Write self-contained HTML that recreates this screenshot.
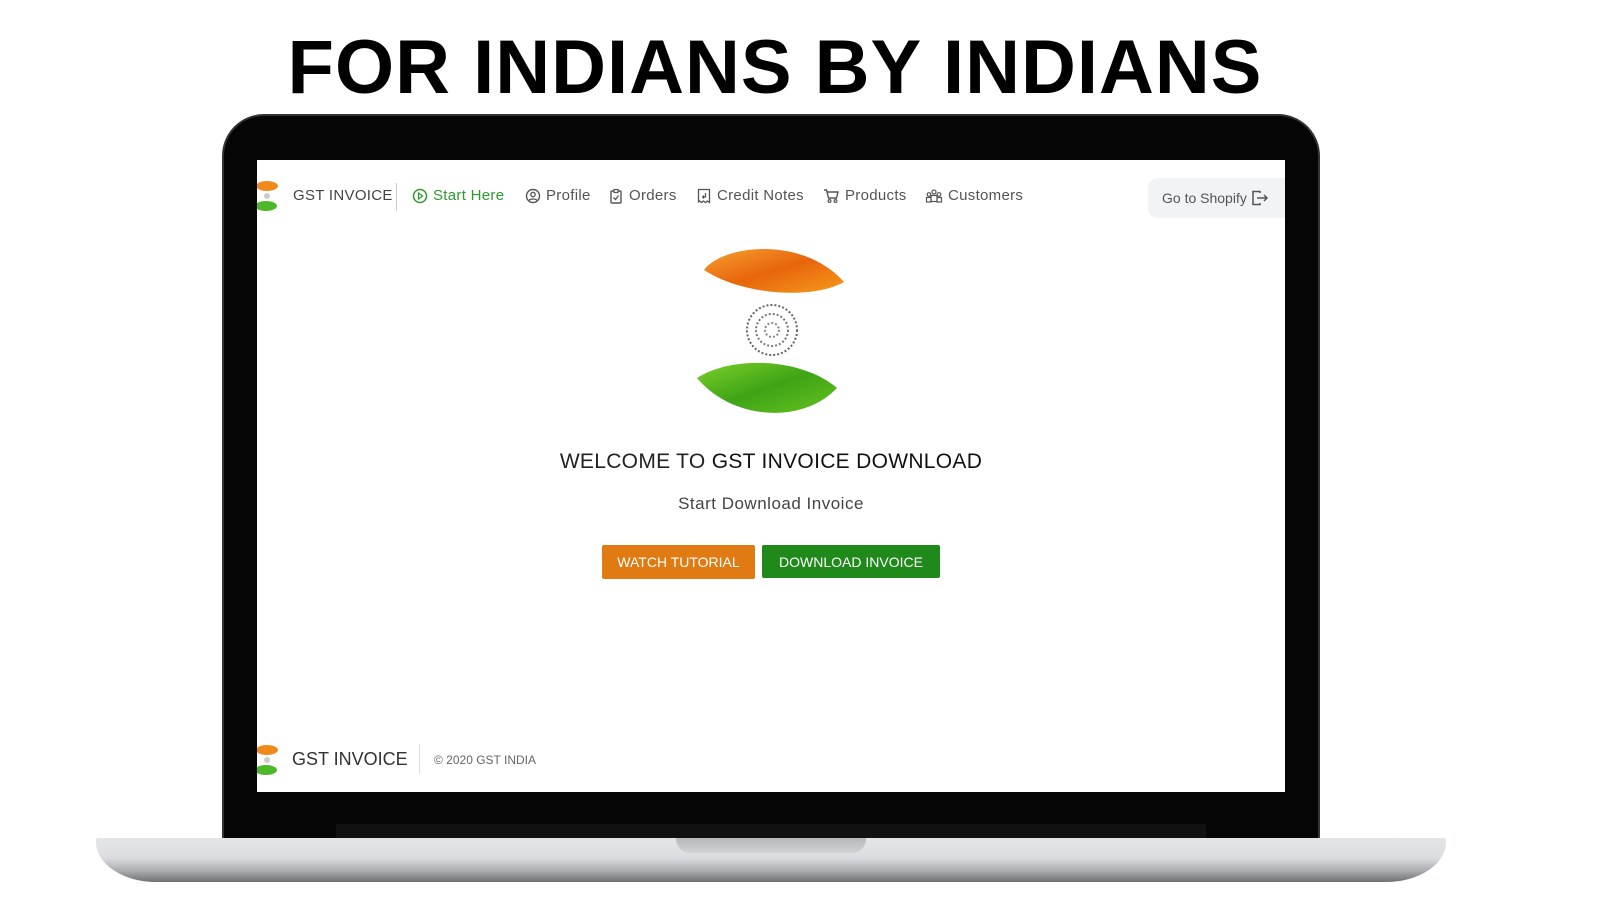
<!DOCTYPE html>
<html><head><meta charset="utf-8"><style>
*{margin:0;padding:0;box-sizing:border-box}
body{width:1600px;height:900px;background:#fff;position:relative;overflow:hidden;font-family:"Liberation Sans",sans-serif}
.title{position:absolute;left:0;width:1550px;top:24px;text-align:center;font-weight:bold;font-size:76px;letter-spacing:1px;color:#000}
.bezel{position:absolute;left:222px;top:114px;width:1098px;height:730px;background:#050505;border-radius:42px 42px 8px 8px;border:2px solid #333}
.screen{position:absolute;left:257px;top:160px;width:1028px;height:632px;background:#fff;overflow:hidden}
.base{position:absolute;left:96px;top:838px;width:1350px;height:44px;background:linear-gradient(#e4e5e7 0%,#dcdde0 45%,#a9abaf 75%,#6f7175 100%);border-radius:2px 2px 60px 60px / 2px 2px 40px 40px}
.notch{position:absolute;left:676px;top:838px;width:190px;height:15px;background:linear-gradient(#b8b9bc,#d0d1d3);border-radius:0 0 14px 14px}
.hinge{position:absolute;left:336px;top:824px;width:870px;height:14px;background:#111}
.nav span{position:absolute;top:27px;display:flex;align-items:center;font-size:15px;color:#555;letter-spacing:.3px}
.nav svg{margin-right:5px}
.flag{position:absolute;width:24px;height:32px}
.btn{position:absolute;top:385px;height:34px;color:#fff;font-size:14px;display:flex;align-items:center;justify-content:center;border-radius:2px}
</style></head><body>
<div class="title">FOR INDIANS BY INDIANS</div>
<div class="bezel"></div>
<div class="hinge"></div>
<div class="base"></div>
<div class="notch"></div>
<div class="screen">
 <svg class="flag" style="left:-2px;top:20px" viewBox="0 0 24 32"><ellipse cx="12" cy="6" rx="11" ry="5" fill="#f08a1c"/><circle cx="12" cy="16" r="3" fill="#ccc"/><ellipse cx="11" cy="26" rx="11" ry="5" fill="#4cb82a"/></svg>
 <div class="nav">
  <span style="left:36px;color:#444">GST INVOICE</span>
  <span style="left:139px;top:23px;width:1px;height:28px;background:#ccc"></span>
  <span style="left:155px;color:#2e9a2e"><svg width="16" height="16" viewBox="0 0 16 16"><circle cx="8" cy="8" r="6.5" fill="none" stroke="#2e9a2e" stroke-width="1.5"/><path d="M6.5 5v6l4-3z" fill="none" stroke="#2e9a2e" stroke-width="1.3"/></svg>Start Here</span>
  <span style="left:268px"><svg width="16" height="16" viewBox="0 0 16 16"><circle cx="8" cy="8" r="6.5" fill="none" stroke="#555" stroke-width="1.4"/><circle cx="8" cy="6.5" r="2.2" fill="none" stroke="#555" stroke-width="1.3"/><path d="M4 12.5c1-2 7-2 8 0" fill="none" stroke="#555" stroke-width="1.3"/></svg>Profile</span>
  <span style="left:351px"><svg width="16" height="16" viewBox="0 0 16 16"><rect x="3" y="3" width="10" height="12" rx="1" fill="none" stroke="#555" stroke-width="1.4"/><rect x="6" y="1.5" width="4" height="3" fill="#fff" stroke="#555" stroke-width="1.2"/><path d="M5.5 9.5l2 2 3-4" fill="none" stroke="#555" stroke-width="1.3"/></svg>Orders</span>
  <span style="left:439px"><svg width="16" height="16" viewBox="0 0 16 16"><path d="M2.5 1.5h11v13l-2-1.5-2 1.5-2-1.5-2 1.5-2-1.5-1 .8z" fill="none" stroke="#555" stroke-width="1.3"/><path d="M9.5 5v4h-3M8 7.5l-1.5 1.5 1.5 1.5" fill="none" stroke="#555" stroke-width="1.2"/></svg>Credit Notes</span>
  <span style="left:566px"><svg width="17" height="16" viewBox="0 0 17 16"><path d="M1 2h2.5l2 8h8l1.5-6H4.5" fill="none" stroke="#555" stroke-width="1.4"/><circle cx="6.5" cy="13" r="1.4" fill="none" stroke="#555" stroke-width="1.2"/><circle cx="12.5" cy="13" r="1.4" fill="none" stroke="#555" stroke-width="1.2"/></svg>Products</span>
  <span style="left:668px"><svg width="18" height="16" viewBox="0 0 18 16"><circle cx="9" cy="4" r="2" fill="none" stroke="#555" stroke-width="1.2"/><circle cx="4" cy="6.5" r="1.8" fill="none" stroke="#555" stroke-width="1.2"/><circle cx="14" cy="6.5" r="1.8" fill="none" stroke="#555" stroke-width="1.2"/><rect x="6" y="7.5" width="6" height="6" fill="none" stroke="#555" stroke-width="1.2"/><rect x="1.5" y="9.5" width="4.5" height="4.5" fill="none" stroke="#555" stroke-width="1.2"/><rect x="12" y="9.5" width="4.5" height="4.5" fill="none" stroke="#555" stroke-width="1.2"/></svg>Customers</span>
 </div>
 <div style="position:absolute;left:891px;top:18px;width:150px;height:40px;background:#f2f3f5;border-radius:10px;font-size:14px;color:#555;display:flex;align-items:center;padding-left:14px">Go to Shopify&nbsp;<svg width="18" height="16" viewBox="0 0 18 16"><path d="M9 3V1.5H2v13h7V13" fill="none" stroke="#555" stroke-width="1.5"/><path d="M6 8h10M13 5l3 3-3 3" fill="none" stroke="#555" stroke-width="1.5"/></svg></div>
 <svg style="position:absolute;left:435px;top:80px" width="160" height="180" viewBox="0 0 160 180">
  <defs><linearGradient id="o" x1="0" x2="1" y1="0" y2="1"><stop offset="0" stop-color="#f7a030"/><stop offset=".5" stop-color="#e8650c"/><stop offset="1" stop-color="#f59a1d"/></linearGradient>
  <linearGradient id="g" x1="0" x2="1" y1="0" y2="1"><stop offset="0" stop-color="#7ed02a"/><stop offset=".5" stop-color="#3ea416"/><stop offset="1" stop-color="#66c21e"/></linearGradient></defs>
  <path d="M12 30C30 5 110 -5 152 42C120 60 50 55 12 30z" fill="url(#o)"/>
  <circle cx="80" cy="90" r="25" fill="none" stroke="#666" stroke-width="2" stroke-dasharray="2 2"/>
  <circle cx="80" cy="90" r="16" fill="none" stroke="#777" stroke-width="2" stroke-dasharray="2 2"/>
  <circle cx="80" cy="90" r="7" fill="none" stroke="#888" stroke-width="2" stroke-dasharray="2 2"/>
  <path d="M5 138C40 115 110 118 145 148C110 185 40 180 5 138z" fill="url(#g)"/>
 </svg>
 <div style="position:absolute;left:0;width:1028px;top:290px;text-align:center;font-size:21px;color:#222;letter-spacing:.3px">WELCOME TO <span style="color:#111">GST INVOICE DOWNLOAD</span></div>
 <div style="position:absolute;left:0;width:1028px;top:334px;text-align:center;font-size:17px;color:#444;letter-spacing:.5px">Start Download Invoice</div>
 <div class="btn" style="left:345px;width:153px;background:#e07a12">WATCH TUTORIAL</div>
 <div class="btn" style="left:505px;width:178px;background:#1f8a1a;top:385px;height:33px">DOWNLOAD INVOICE</div>
 <svg class="flag" style="left:-2px;top:584px" viewBox="0 0 24 32"><ellipse cx="12" cy="6" rx="11" ry="5" fill="#f08a1c"/><circle cx="12" cy="16" r="3" fill="#ccc"/><ellipse cx="11" cy="26" rx="11" ry="5" fill="#4cb82a"/></svg>
 <div style="position:absolute;left:35px;top:589px;font-size:18px;color:#333">GST INVOICE</div>
 <div style="position:absolute;left:162px;top:584px;width:1px;height:30px;background:#ddd"></div>
 <div style="position:absolute;left:177px;top:593px;font-size:12px;color:#666">© 2020 GST INDIA</div>
</div>
</body></html>
